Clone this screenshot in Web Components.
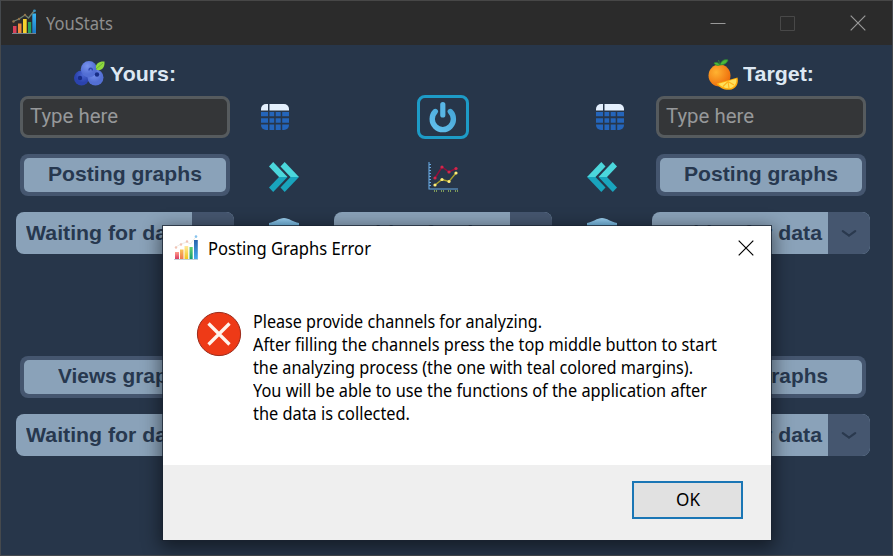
<!DOCTYPE html>
<html lang="en"><head><meta charset="utf-8"><title>YouStats</title>
<style>html,body{margin:0;width:893px;height:556px;overflow:hidden;background:#27364a}</style></head>
<body><stats-app></stats-app>
<script>
const define=(name,html,setup)=>customElements.define(name,class extends HTMLElement{
  connectedCallback(){
    if(this.shadowRoot)return;
    const t=document.createElement('template');
    t.innerHTML=typeof html==='function'?html(this):html;
    this.attachShadow({mode:'open'}).append(t.content.cloneNode(true));
    if(setup)setup(this);
  }
});

/* One line of text, condensed or widened to the width attribute. */
define('fit-text',el=>`<style>:host{display:block;white-space:nowrap;width:${el.getAttribute('width')}px}
span{display:inline-block;transform-origin:0 50%}</style><span>${el.getAttribute('text')}</span>`,el=>{
  const s=el.shadowRoot.querySelector('span');
  const w=s.getBoundingClientRect().width;
  if(w)s.style.transform=`scaleX(${el.getAttribute('width')/w})`;
});

const icons={
chart:[24,26,`<defs><linearGradient id="b" x2="0" y2="1"><stop stop-color="#39b7f2"/><stop offset="1" stop-color="#1a79c8"/></linearGradient></defs>
<path d="M1 17h3.5v7H1z" fill="#d9415a"/><path d="M6 14.5h3.5V24H6z" fill="#ee8a3c"/><path d="M11 10h3.7v14H11z" fill="#f6d32d"/><path d="M16 13h3.2v11H16z" fill="#27a35c"/><path d="M20.3 4.5H24V24h-3.7z" fill="url(#b)"/><path d="M0 24.5h24" stroke="#8a99a8" stroke-width=".8"/><path d="M1 12.5 7 10l6-4 3.5 3L22.5 1.5" fill="none" stroke="#6e8173" stroke-width="1.3"/><g fill="#92734c"><circle cx="1.5" cy="12.5" r="1.2"/><circle cx="7" cy="10" r="1.2"/><circle cx="13" cy="6" r="1.2"/></g><circle cx="22.5" cy="1.8" r="1.4" fill="#3990bb"/>`],
chartlight:[24,26,`<defs><linearGradient id="r" x2="0" y2="1"><stop stop-color="#ff9d8b"/><stop offset="1" stop-color="#d83a62"/></linearGradient><linearGradient id="o" x2="0" y2="1"><stop stop-color="#f8c456"/><stop offset="1" stop-color="#ef7652"/></linearGradient><linearGradient id="y" x2="0" y2="1"><stop stop-color="#ffe99a"/><stop offset="1" stop-color="#f2c51c"/></linearGradient><linearGradient id="g" x2="0" y2="1"><stop stop-color="#66d26d"/><stop offset="1" stop-color="#159d72"/></linearGradient><linearGradient id="b" x2="0" y2="1"><stop stop-color="#2765ad"/><stop offset="1" stop-color="#45a8ed"/></linearGradient></defs>
<path d="M1 17h4v7H1z" fill="url(#r)"/><path d="M6 14.5h3.5V24H6z" fill="url(#o)"/><path d="M10.5 11h3.7v13h-3.7z" fill="url(#y)"/><path d="M15.5 12h3.2v12h-3.2z" fill="url(#g)"/><path d="M20 5h3.8v19H20z" fill="url(#b)"/><path d="M0 24.5h24" stroke="#aec4ce" stroke-width=".8"/><path d="M1 12.5 7 9l6-2 3.5 2L22 1.5" fill="none" stroke="#efece6" stroke-width="1"/><g fill="#f1c4b5"><circle cx="2" cy="12.5" r="1.2"/><circle cx="7" cy="9.5" r="1.2"/><circle cx="13" cy="6.5" r="1.2"/></g><circle cx="22" cy="1.6" r="1.3" fill="#86c3ed"/>`],
berry:[31,26,`<defs><radialGradient id="a" cx=".4" cy=".3"><stop stop-color="#7893ef"/><stop offset="1" stop-color="#536fd4"/></radialGradient><radialGradient id="d" cx=".6" cy=".3"><stop stop-color="#4b67d2"/><stop offset="1" stop-color="#2b43ae"/></radialGradient></defs><circle cx="7.500" cy="17" r="7.500" fill="url(#d)"/><circle cx="21.5" cy="16.5" r="8" fill="url(#a)"/><circle cx="15" cy="8.3" r="8.200" fill="url(#a)"/><circle cx="6" cy="17" r="2.2" fill="#182d86"/><circle cx="23" cy="13.5" r="2.2" fill="#182d86"/><path d="M15 9.5c0-3 3.5-3 3.4 0" stroke="#3048ad" fill="none" stroke-width="1.4"/><path d="M22 8C21 2 26 0 30.5.5 31 6 28 10 23 9z" fill="#8fd83f"/><path d="m22 8 7-6" stroke="#5cab31" stroke-width=".8"/>`],
orange:[30,31,`<defs><radialGradient id="o" cx=".35" cy=".35" r=".7"><stop stop-color="#ffb331"/><stop offset="1" stop-color="#ee6d0c"/></radialGradient></defs><circle cx="11.5" cy="16.5" r="11" fill="url(#o)"/><path d="M12 6 10.5 1M12 6c1-4 4-6 8-5-1 3-4 5-8 5M12 6C10 3 8 3 6 4c1 2 3 3 6 2" stroke="#2f8f32" stroke-width=".800" fill="#4db838"/><path d="M8.5 24.5 29.500 18.5c1.500 6-1.500 12-8 12.300-5 .500-10-2-13-6.300z" fill="#ffab0d"/><path d="m10.500 24.800 17.800-5c.700 5-2 9-7 9.500-4 .300-8-1.500-10.800-4.500z" fill="#ffe05b"/><path d="m20 22.500-5 5m5-5 1 6.500m-1-6.500 6 3.500" stroke="#ffb21b" stroke-width="1.100"/>`],
table:[28,26,`<clipPath id="c"><rect width="28" height="26" rx="5"/></clipPath><g clip-path="url(#c)"><path d="M0 0h7v6.500H0zM8.500 0H28v6.500H8.500z" fill="#e4f0fd"/><path d="M0 8h7v4.300H0zM8.500 8h4.700v4.300H8.500zM14.700 8h5v4.300h-5zM21.200 8H28v4.300h-6.800zM0 14.300h7v4.400H0zM8.500 14.300h4.700v4.400H8.500zM14.700 14.300h5v4.400h-5zM21.200 14.300H28v4.400h-6.800zM0 20.600h7V26H0zM8.500 20.600h4.700V26H8.500zM14.700 20.600h5V26h-5zM21.200 20.600H28V26h-6.800z" fill="#2465bb"/></g>`],
arrows:[30,30,`<g fill="#4bd7dc"><path d="M0 4.500 4.200 0 18.500 15H10z"/><path d="M11.500 4.500 15.700 0 30 15h-8.500z"/></g><g fill="#19a4bd"><path d="M0 25.500 4.200 30 18.500 15H10z"/><path d="M11.500 25.500 15.700 30 30 15h-8.500z"/></g>`],
power:[28,32,`<defs><linearGradient id="p" gradientUnits="userSpaceOnUse" x1="24" y1="5" x2="4" y2="30"><stop stop-color="#43a3d4"/><stop offset="1" stop-color="#63c1ee"/></linearGradient></defs><path d="M6.300 10.500A10.600 10.600 0 1 0 21.300 10.500" fill="none" stroke="url(#p)" stroke-width="5.400" stroke-linecap="round"/><path d="M13.800 3.700v10.300" stroke="#58b6e5" stroke-width="5.200" stroke-linecap="round"/>`],
plot:[30,31,`<path d="M1 0v27h29M1 2.500h2M1 5.500h2M1 8.500h2M1 11.500h2M1 14.500h2M1 17.500h2M1 20.500h2M1 23.500h2" stroke="#67a7df" stroke-width="1.100" fill="none"/><path d="m7 16 7-11 7 5 7-3.500" stroke="#920f3b" stroke-width="1.500" fill="none"/><path d="m7 23 7-5.500 7 2L28 11" stroke="#a9a02d" stroke-width="1.400" fill="none"/><g fill="#d3274b"><circle cx="7" cy="16" r="1.600"/><circle cx="14" cy="5" r="1.600"/><circle cx="21" cy="10" r="1.600"/><circle cx="28" cy="6.500" r="1.600"/></g><g fill="#ffec78"><circle cx="7" cy="23" r="1.600"/><circle cx="14" cy="17.500" r="1.600"/><circle cx="21" cy="19.500" r="1.600"/><circle cx="28" cy="11" r="1.600"/></g><path d="M6.500 28v2m2-2v2m5-2v2m2-2v2m5-2v2m2-2v2m5-2v2m2-2v2" stroke="#7e9b59"/>`],
shield:[30,30,`<defs><linearGradient id="s" x2="0" y2="1"><stop stop-color="#9bcdec"/><stop offset=".3" stop-color="#63acd9"/></linearGradient></defs><path d="M0 5C6 4 10 0 15 0s9 4 15 5v10c0 8-8 13-15 15C8 28 0 23 0 15z" fill="url(#s)"/>`],
error:[46,46,`<circle cx="23" cy="23" r="21.600" fill="#ee3a17" stroke="#9b2b1b" stroke-width="1"/><path d="m12.500 12.500 21 21m0-21-21 21" stroke="#fff4ed" stroke-width="3.300"/>`],
min:[16,16,`<path d="M.500 8.500h15" stroke="#999" stroke-width="1"/>`],
max:[16,16,`<path d="M.500 1.500h14v14h-14z" stroke="#484848" fill="none"/>`],
close:[16,16,`<path d="m.700.700 14.600 14.600m0-14.600L.700 15.300" stroke="currentColor" stroke-width="1.200"/>`],
chevron:[14,7,`<path d="M.800 1.200 5 4.200m8.200-3L9 4.200M5.500 4.500 7 5.700l1.500-1.200" fill="none" stroke="#2a394e" stroke-width="2.200" stroke-linecap="round"/>`]
};
define('app-icon',el=>{const [w,h,body]=icons[el.getAttribute('name')];
return `<style>:host{display:block;flex:none;width:${w}px;height:${h}px}svg{display:block;overflow:visible}</style><svg width="${w}" height="${h}" viewBox="0 0 ${w} ${h}">${body}</svg>`});

define('title-bar',`<style>:host{display:flex;align-items:center;height:45px;background:#2b2b2b;color:#8e8e8e;padding:0 27px 1px 12px;box-sizing:border-box;border-top:1px solid #474747}
fit-text{font:18px/24px "Noto Sans","Open Sans",sans-serif;margin:1px 0 0 10px}nav{display:flex;gap:54px;margin-left:auto;color:#999}app-icon[name=chart]{margin-top:-2px}</style>
<app-icon name="chart"></app-icon><fit-text width="67" text="YouStats"></fit-text><nav><app-icon name="min"></app-icon><app-icon name="max"></app-icon><app-icon name="close"></app-icon></nav>`);

define('side-heading',`<style>:host{display:flex;align-items:center;justify-content:center;gap:5px;height:36px;color:#dde8f3;font:bold 21px/26px "Liberation Sans",Arial,sans-serif}</style><slot></slot>`);

define('channel-input',`<style>:host{display:block;box-sizing:border-box;height:42px;margin:0 4px;background:#343638;border:3px solid #565b5e;border-radius:8px;color:#96989a;padding:5px 7px;font:20.500px/24px Roboto,sans-serif}</style><fit-text width="88" text="Type here"></fit-text>`);

define('graph-button',el=>`<style>:host{display:flex;justify-content:center;box-sizing:border-box;height:42px;margin:0 4px;background:#45566f;border-radius:8px;padding:4px;color:#27384f;font:bold 21px/32px "Liberation Sans",Arial,sans-serif}div{flex:1;display:flex;justify-content:center;background:#8aa2b9;border-radius:5px}</style><div><fit-text width="${el.getAttribute('width')}" text="${el.getAttribute('label')}"></fit-text></div>`);

define('data-select',`<style>:host{display:flex;height:42px;border-radius:8px;overflow:hidden;background:#8aa2b9;color:#27384f;font:bold 21px/42px "Liberation Sans",Arial,sans-serif}fit-text{margin-left:10px}div{width:42px;margin-left:auto;background:#45566f;display:flex;align-items:center;justify-content:center}</style><fit-text width="160" text="Waiting for data"></fit-text><div><app-icon name="chevron"></app-icon></div>`);

define('icon-button',`<style>:host{display:flex;align-items:center;justify-content:center}:host([framed]){width:52px;height:44px;box-sizing:border-box;border:3px solid #1d9bc7;border-radius:8px;justify-self:center;align-self:center}:host([flip]){transform:scaleX(-1)}</style><slot></slot>`);

define('message-dialog',`<style>:host{display:flex;flex-direction:column;width:608px;height:314px;background:#fff;color:#000;outline:1px solid rgba(25,35,48,.75);box-shadow:0 5px 17px 3px rgba(0,0,0,.48);font:17.500px/23px "Noto Sans","Open Sans",sans-serif}
header{display:flex;align-items:center;height:44px;padding:0 17px 0 11px}header fit-text{margin:1px 0 0 10px}header app-icon:last-child{margin:-1px 0 0 auto}
section{flex:1;display:flex;padding:41px 33px 0;gap:11px}section>div{margin-top:-1px}
footer{height:75px;box-sizing:border-box;background:#efefef;padding:16px 28px;display:flex;justify-content:flex-end}
button{all:unset;display:flex;align-items:center;justify-content:center;width:111px;height:38px;box-sizing:border-box;border:2px solid #1a76b5;background:#e1e1e1;padding-bottom:1px}</style>
<header><app-icon name="chartlight"></app-icon><fit-text width="163" text="Posting Graphs Error"></fit-text><app-icon name="close"></app-icon></header>
<section><app-icon name="error"></app-icon><div>
<fit-text width="289" text="Please provide channels for analyzing."></fit-text>
<fit-text width="464" text="After filling the channels press the top middle button to start"></fit-text>
<fit-text width="440" text="the analyzing process (the one with teal colored margins)."></fit-text>
<fit-text width="454" text="You will be able to use the functions of the application after"></fit-text>
<fit-text width="157" text="the data is collected."></fit-text></div></section>
<footer><button><fit-text width="24" text="OK"></fit-text></button></footer>`);

define('stats-app',`<style>:host{display:block;position:relative;box-sizing:border-box;width:893px;height:556px;background:#27364a;overflow:hidden}
main{display:grid;grid-template-columns:218px 100px 218px 100px 218px;grid-template-rows:36px 4px 42px 16px 42px 16px 42px 102px 42px 16px 42px;padding:11px 0 0 16px}
.c1{grid-column:1}.c2{grid-column:2}.c3{grid-column:3}.c4{grid-column:4}.c5{grid-column:5}
.h{grid-row:1}.i{grid-row:3}.p{grid-row:5}.d{grid-row:7}.v{grid-row:9}.w{grid-row:11}
.tl{padding-right:18px}.tr{padding-left:16px}.p.c2,.p.c4{padding-top:4px}.p.c3{padding-top:4px}
message-dialog{position:absolute;left:163px;top:226px}
.frame{position:absolute;inset:0;border:solid #45494d;border-width:0 1px 1px 1px;pointer-events:none}</style>
<title-bar></title-bar>
<main>
<side-heading class="h c1"><app-icon name="berry"></app-icon><fit-text width="66" text="Yours:"></fit-text></side-heading>
<side-heading class="h c5"><app-icon name="orange"></app-icon><fit-text width="71" text="Target:"></fit-text></side-heading>
<channel-input class="i c1"></channel-input>
<icon-button class="i c2 tl"><app-icon name="table"></app-icon></icon-button>
<icon-button class="i c3" framed><app-icon name="power"></app-icon></icon-button>
<icon-button class="i c4 tr"><app-icon name="table"></app-icon></icon-button>
<channel-input class="i c5"></channel-input>
<graph-button class="p c1" width="154" label="Posting graphs"></graph-button>
<icon-button class="p c2"><app-icon name="arrows"></app-icon></icon-button>
<icon-button class="p c3"><app-icon name="plot"></app-icon></icon-button>
<icon-button class="p c4" flip><app-icon name="arrows"></app-icon></icon-button>
<graph-button class="p c5" width="154" label="Posting graphs"></graph-button>
<data-select class="d c1"></data-select>
<icon-button class="d c2"><app-icon name="shield"></app-icon></icon-button>
<data-select class="d c3"></data-select>
<icon-button class="d c4"><app-icon name="shield"></app-icon></icon-button>
<data-select class="d c5"></data-select>
<graph-button class="v c1" width="134" label="Views graphs"></graph-button>
<graph-button class="v c5" width="134" label="Views graphs"></graph-button>
<data-select class="w c1"></data-select>
<data-select class="w c5"></data-select>
</main>
<div class="frame"></div>
<message-dialog></message-dialog>`);
</script></body></html>
